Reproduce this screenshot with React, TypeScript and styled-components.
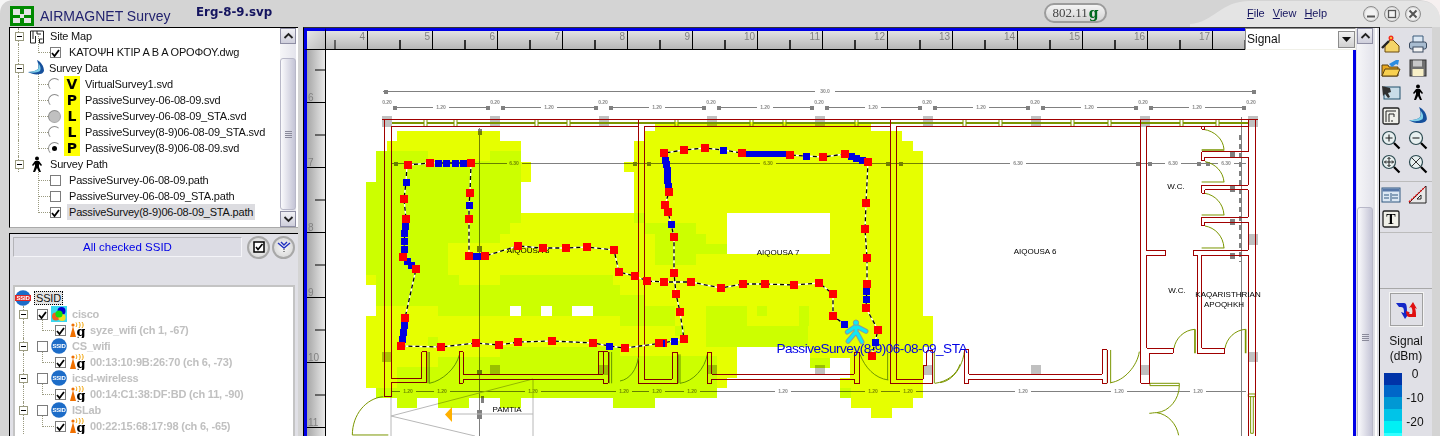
import React from 'react';
import styled, { createGlobalStyle } from 'styled-components';

const GlobalStyle = createGlobalStyle`
  html, body {
    margin: 0;
    padding: 0;
    background: #f4f4f4;
    overflow: hidden;
  }
  * { box-sizing: border-box; }
`;

const panelGrey = '#e0e0e6';
const chromeGrey = '#d4d4d4';
const sans = '"Liberation Sans", Arial, sans-serif';

const Window = styled.div`
  width: 1440px;
  height: 436px;
  display: flex;
  flex-direction: column;
  overflow: hidden;
  font-family: ${sans};
  background: ${chromeGrey};
`;

/* ---------- title bar ---------- */

const TitleBar = styled.div`
  position: relative;
  height: 27px;
  flex: none;
  display: flex;
  align-items: center;
  padding-left: 10px;
  background: ${chromeGrey};
`;

const TitleWave = styled.svg`
  position: absolute;
  left: 0;
  top: 0;
`;

const TitleItems = styled.div`
  position: relative;
  display: flex;
  align-items: center;
  width: 100%;
`;

const Logo = styled.svg`
  flex: none;
  margin-top: 4px;
`;

const AppName = styled.div`
  width: 137px;
  margin-left: 6px;
  margin-top: 4px;
  font-size: 14px;
  color: #23236f;
  white-space: nowrap;
`;

const FileName = styled.div`
  margin-left: 19px;
  margin-top: -3px;
  width: 848px;
  font: bold 11.8px "DejaVu Sans", sans-serif;
  color: #14145f;
`;

const ModePill = styled.div`
  width: 63px;
  height: 20px;
  margin-top: -2px;
  border: 2px solid #9c9c9c;
  border-radius: 10px;
  background: linear-gradient(#f4f4f4, #d4d4d4);
  display: flex;
  align-items: center;
  justify-content: center;
  font: 13px "Liberation Serif", serif;
  color: #444;
`;

const ModeG = styled.span`
  font: bold 14px "DejaVu Serif", serif;
  color: #006a1e;
  margin-left: 1px;
`;

const Menu = styled.div`
  margin-left: 140px;
  margin-top: -1px;
  display: flex;
  gap: 8px;
  font-size: 11px;
  color: #14145f;
`;

const MenuLetter = styled.span`
  text-decoration: underline;
`;

const WinButtons = styled.div`
  margin-left: 36px;
  display: flex;
  gap: 5px;
`;

const WinButton = styled.div`
  width: 16px;
  height: 16px;
  border-radius: 50%;
  border: 1px solid #8c8c8c;
  background: #f2f2f2;
  box-shadow: inset 0 0 2px #aaa;
  display: flex;
  align-items: center;
  justify-content: center;
`;

/* ---------- body ---------- */

const Body = styled.div`
  flex: 1;
  display: flex;
  min-height: 0;
`;

const SidePanel = styled.div`
  width: 303px;
  flex: none;
  padding-left: 9px;
  display: flex;
  flex-direction: column;
  background: ${chromeGrey};
`;

const TopTree = styled.div`
  height: 201px;
  width: 289px;
  flex: none;
  display: flex;
  border-top: 1px solid #000;
  border-left: 1px solid #000;
  background: #fff;
  border-bottom: 1px solid #aaa;
`;

const TreeList = styled.div`
  flex: 1;
  min-width: 0;
`;

const Scrollbar = styled.div`
  width: 16px;
  flex: none;
  display: flex;
  flex-direction: column;
  background: linear-gradient(90deg, #f6f6f8, #e4e4ec);
`;

const TreeScroll = styled(Scrollbar)`
  margin-right: 2px;
`;

const ScrollButton = styled.div`
  height: 16px;
  flex: none;
  border: 1px solid #8e8ea4;
  background: linear-gradient(#f0f0f4, #cfcfdc);
  display: flex;
  align-items: center;
  justify-content: center;
`;

const ScrollThumb = styled.div<{ $top: number; $height: number }>`
  margin-top: ${(p) => p.$top}px;
  height: ${(p) => p.$height}px;
  flex: none;
  border: 1px solid #b8b8c8;
  border-radius: 3px;
  background: linear-gradient(90deg, #fafafc, #c4c4d6);
  display: flex;
  align-items: center;
  justify-content: center;
`;

const ScrollGrip = styled.div`
  width: 7px;
  height: 7px;
  background: repeating-linear-gradient(#8a8a9a 0 1px, transparent 1px 2px);
`;

const ScrollFill = styled.div`
  flex: 1;
`;

const Row = styled.div<{ $pad: number; $trunk?: boolean; $elbow?: number; $trunkAt?: number }>`
  position: relative;
  height: 16px;
  padding-left: ${(p) => p.$pad}px;
  display: flex;
  align-items: center;
  font-size: 11px;
  letter-spacing: -0.2px;
  color: #111;
  white-space: nowrap;

  &::before {
    content: '';
    display: ${(p) => (p.$trunk ? 'block' : 'none')};
    position: absolute;
    left: ${(p) => p.$trunkAt ?? 8}px;
    top: 0;
    bottom: 0;
    border-left: 1px dotted #9a9a80;
  }

  &::after {
    content: '';
    display: ${(p) => (p.$elbow ? 'block' : 'none')};
    position: absolute;
    left: ${(p) => p.$elbow}px;
    top: -8px;
    height: 16px;
    width: 11px;
    border-left: 1px dotted #9a9a80;
    border-bottom: 1px dotted #9a9a80;
  }
`;

const Expander = styled.div<{ $gap: number }>`
  position: relative;
  z-index: 1;
  width: 9px;
  height: 9px;
  flex: none;
  margin-right: ${(p) => p.$gap}px;
  border: 1px solid #9a9a80;
  background: #fff;
  display: flex;
  align-items: center;
  justify-content: center;

  &::after {
    content: '';
    width: 5px;
    height: 1px;
    background: #000;
  }
`;

const CheckFrame = styled.div<{ $gap: number }>`
  position: relative;
  z-index: 1;
  width: 11px;
  height: 11px;
  flex: none;
  margin-right: ${(p) => p.$gap}px;
  border: 1px solid #7c7c7c;
  background: #fff;
`;

const Radio = styled.div<{ $state: 'empty' | 'grey' | 'on' }>`
  position: relative;
  z-index: 1;
  width: 13px;
  height: 13px;
  flex: none;
  margin-right: 3px;
  border-radius: 50%;
  border: 1px solid ${(p) => (p.$state === 'grey' ? '#a8a8a8' : '#fff')};
  border-top-color: #8c8c8c;
  border-left-color: #8c8c8c;
  background: ${(p) => (p.$state === 'grey' ? '#c0c0c0' : '#fff')};
  display: flex;
  align-items: center;
  justify-content: center;

  &::after {
    content: '';
    display: ${(p) => (p.$state === 'on' ? 'block' : 'none')};
    width: 5px;
    height: 5px;
    border-radius: 50%;
    background: #000;
  }
`;

const TypeTag = styled.div`
  width: 16px;
  height: 16px;
  flex: none;
  margin-right: 5px;
  background: #ffff00;
  font: bold 14px "DejaVu Sans", sans-serif;
  letter-spacing: 0;
  line-height: 16px;
  text-align: center;
  color: #000;
`;

const NodeIcon = styled.span<{ $gap: number }>`
  position: relative;
  z-index: 1;
  display: flex;
  flex: none;
  margin-right: ${(p) => p.$gap}px;
`;

const Selected = styled.span`
  background: #dcdce0;
  margin-left: -2px;
  padding: 0 2px;
  width: 188px;
  height: 16px;
  line-height: 16px;
`;

const LowerPanel = styled.div`
  margin-top: 5px;
  flex: 1;
  min-height: 0;
  width: 289px;
  border-top: 1px solid #000;
  border-left: 1px solid #000;
  padding: 3px 3px 0 3px;
  background: ${panelGrey};
  display: flex;
  flex-direction: column;
`;

const FilterRow = styled.div`
  height: 20px;
  flex: none;
  display: flex;
  align-items: center;
`;

const FilterField = styled.div`
  width: 230px;
  height: 20px;
  border: 1px solid #f4f4f8;
  border-top-color: #b4b4b8;
  border-left-color: #b4b4b8;
  background: #dcdce4;
  text-align: center;
  line-height: 18px;
  font-size: 11.5px;
  color: #0000e6;
`;

const RoundButton = styled.div<{ $ml: number }>`
  width: 23px;
  height: 23px;
  flex: none;
  margin-left: ${(p) => p.$ml}px;
  border-radius: 50%;
  border: 2px solid #a8a8a8;
  background: radial-gradient(#f8f8f8, #d0d0d0);
  display: flex;
  align-items: center;
  justify-content: center;
`;

const SsidTree = styled.div`
  margin-top: 28px;
  flex: 1;
  min-height: 0;
  width: 282px;
  overflow: hidden;
  padding-top: 3px;
  background: #fff;
  border: 2px solid #c4c4c4;
  border-bottom: none;
`;

const RootLabel = styled.span`
  margin-left: 3px;
  padding: 0 1px;
  height: 14px;
  line-height: 13px;
  border: 1px dotted #000;
  background: #e4e4e4;
`;

const SsidName = styled.span`
  font-weight: bold;
  font-size: 11px;
  color: #c0c0c0;
`;

/* ---------- map ---------- */

const MapPane = styled.div`
  width: 1077px;
  flex: none;
  display: flex;
  border-left: 1px solid #000;
  border-top: 1px solid #333;
  border-right: 1px solid #000;
  background: ${panelGrey};
`;

const MapFrame = styled.div`
  width: 1052px;
  flex: none;
  display: flex;
  flex-direction: column;
`;

const RulerRow = styled.div`
  height: 22px;
  flex: none;
  display: flex;
`;

const RulerCorner = styled.div`
  width: 22px;
  flex: none;
  border-top: 3px solid #0000e6;
  border-left: 3px solid #0000e6;
  border-right: 1px solid #000;
  border-bottom: 1px solid #000;
  background: linear-gradient(135deg, #e6e6e6, #bcbcbc);
`;

const TopRuler = styled.svg`
  width: 919px;
  height: 22px;
  flex: none;
  border-top: 3px solid #0000e6;
  background: linear-gradient(#e2e2e2, #b4b4b4);
`;

const LensSelect = styled.div`
  flex: 1;
  display: flex;
  align-items: center;
  background: #fff;
  border: 1px solid #8c8c8c;
  border-right-color: #f0f0e8;
  border-bottom-color: #f0f0e8;
  padding-left: 1px;
  font-size: 12px;
  color: #111;
`;

const LensValue = styled.span`
  flex: 1;
`;

const LensArrow = styled.div`
  width: 17px;
  height: 17px;
  flex: none;
  border: 1px solid #8c8c8c;
  background: linear-gradient(#f2f2f2, #d0d0d0);
  display: flex;
  align-items: center;
  justify-content: center;
`;

const CanvasRow = styled.div`
  flex: 1;
  min-height: 0;
  display: flex;
  border-left: 3px solid #0000e6;
  border-right: 3px solid #0000e6;
`;

const LeftRuler = styled.svg`
  width: 19px;
  height: 386px;
  flex: none;
  background: linear-gradient(90deg, #a6a6a6, #ececec);
`;

const Plan = styled.svg`
  width: 1027px;
  height: 386px;
  flex: none;
  background: #fff;
`;

const MapScroll = styled(Scrollbar)`
  margin-left: 1px;
`;

const ScrollEdge = styled.div`
  flex: 1;
  border-left: 1px solid #fff;
  border-right: 1px solid #fff;
  margin: 0 2px;
  background: ${chromeGrey};
`;

const RulerNumber = styled.text`
  font: 10px ${sans};
  fill: #808080;
`;

const WallLines = styled.g`
  fill: none;
  stroke: #a00000;
  stroke-width: 3;
  shape-rendering: crispEdges;
`;

const DoorLines = styled.g`
  fill: none;
  stroke: #7a9600;
  stroke-width: 3;
`;

const DimLines = styled.g`
  stroke: #808080;
  stroke-width: 1;
  fill: #808080;
  shape-rendering: crispEdges;
`;

const DimLabel = styled.text`
  font: bold 5px ${sans};
  fill: #8a8a8a;
  stroke: none;
  text-anchor: middle;
`;

const RoomLabel = styled.text`
  font: 8px ${sans};
  fill: #000;
  text-anchor: middle;
`;

const HeatLayer = styled.g`
  mix-blend-mode: multiply;
  shape-rendering: crispEdges;
`;

const PathLabel = styled.text`
  font: 13.6px ${sans};
  fill: #0000e6;
`;

const Markers = styled.g`
  shape-rendering: crispEdges;
`;

/* ---------- right toolbar ---------- */

const ToolBar = styled.div`
  flex: 1;
  display: flex;
  background: ${chromeGrey};
`;

const ToolColumn = styled.div`
  width: 52px;
  flex: none;
  display: flex;
  flex-direction: column;
  align-items: stretch;
  background: ${panelGrey};
  border-top: 1px solid #bcbcbc;
`;

const ToolGrid = styled.div<{ $h: number; $pad: number }>`
  height: ${(p) => p.$h}px;
  flex: none;
  padding-top: ${(p) => p.$pad}px;
  display: grid;
  grid-template-columns: 22px 22px;
  grid-auto-rows: 22px;
  column-gap: 5px;
  row-gap: 2px;
  position: relative;
  border-bottom: 1px solid #bcbcbc;
`;

const ToolIcon = styled.div`
  display: flex;
  align-items: center;
  justify-content: center;
`;

const RefreshPad = styled.div`
  flex: 1;
`;

const LegendBox = styled.div`
  height: 148px;
  flex: none;
  border-top: 1px solid #a8a8a8;
  display: flex;
  flex-direction: column;
  align-items: center;
  padding-top: 4px;
`;

const RefreshButton = styled.div`
  width: 33px;
  height: 33px;
  flex: none;
  border: 1px solid #a0a0a0;
  outline: 1px solid #f4f4f4;
  display: flex;
  align-items: center;
  justify-content: center;
`;

const LegendTitle = styled.div`
  margin-top: 8px;
  font-size: 12px;
  line-height: 15px;
  text-align: center;
  color: #111;
`;

const LegendBody = styled.div`
  margin-top: 9px;
  width: 52px;
  padding-left: 4px;
  display: flex;
`;

const LegendScale = styled.div`
  width: 18px;
  flex: none;
`;

const LegendStep = styled.div<{ $color: string }>`
  height: 12px;
  background: ${(p) => p.$color};
`;

const LegendTicks = styled.div`
  width: 26px;
  margin-top: -11px;
  text-align: center;
  font-size: 12px;
  line-height: 24px;
  color: #111;
`;

/* ---------- icons ---------- */

function Tick() {
  return (
    <svg width="9" height="9" viewBox="0 0 9 9">
      <path d="M1 4l2.5 3L8 1" fill="none" stroke="#000" strokeWidth="1.8" />
    </svg>
  );
}

function SiteMapIcon() {
  return (
    <svg width="16" height="16" viewBox="0 0 16 16" fill="none" stroke="#222" strokeWidth="1">
      <path d="M1.5 15V3h13v12h-4v-4h3M1.5 15h5V8M4 3v8M8 3v3h4" />
    </svg>
  );
}

function BoomerangIcon({ size = 18 }: { size?: number }) {
  return (
    <svg width={size} height={size} viewBox="0 0 18 18">
      <path d="M10 1c4 2 7 6 7 11-1 2-2 3-4 3-4 1-8 0-12-2 4 0 8-1 10-3 1-3 0-6-1-9z" fill="#16509c" />
      <path d="M1 13c4 0 8-1 10-3 1-2 1-4 0-6 3 3 3 6 2 8-3 2-8 2-12 1z" fill="#7fd0e8" />
    </svg>
  );
}

function WalkerIcon() {
  return (
    <svg width="16" height="17" viewBox="0 0 16 17">
      <circle cx="8" cy="2.5" r="2" fill="#000" />
      <path d="M6 5h4l3 4-1 1-2-2v3l2 5h-2l-2-4-2 4H4l2-6V8l-2 2-1-1z" fill="#000" />
    </svg>
  );
}

function Chevron({ down }: { down?: boolean }) {
  return (
    <svg width="11" height="8" viewBox="0 0 11 8">
      <path d={down ? 'M1.5 2l4 4 4-4' : 'M1.5 6l4-4 4 4'} fill="none" stroke="#222" strokeWidth="1.8" />
    </svg>
  );
}

function SsidIcon({ root }: { root?: boolean }) {
  return (
    <svg width="16" height="16" viewBox="0 0 16 16">
      <circle cx="8" cy="8" r="7.8" fill="#1c6cc8" />
      {root && <rect x="0" y="5" width="16" height="6" fill="#e02828" />}
      <text x="8" y="10.2" fontSize="6" fontWeight="bold" textAnchor="middle" fill="#fff" fontFamily={sans}>
        SSID
      </text>
    </svg>
  );
}

function GroupIcon() {
  return (
    <svg width="16" height="16" viewBox="0 0 16 16">
      <rect width="16" height="16" fill="#38d8f0" />
      <circle cx="10.5" cy="5" r="4" fill="#0000d0" />
      <circle cx="5" cy="10.5" r="4" fill="#f06020" />
      <circle cx="11" cy="11.5" r="3.6" fill="#f0e020" />
      <circle cx="8" cy="8" r="3.6" fill="#10e010" />
    </svg>
  );
}

function RadioGIcon() {
  return (
    <svg width="15" height="16" viewBox="0 0 15 16">
      <path d="M3 4l3 11H0z" fill="#f07000" />
      <circle cx="3" cy="3" r="1.6" fill="#f07000" />
      <path d="M6 .5c1 1.5 1 3 0 4.5M9 0c1.5 2 1.5 4 0 6M12 0c1.5 2 1.5 4 0 6" fill="none" stroke="#f0a000" strokeWidth="1" />
      <text x="11" y="14" fontSize="13" fontWeight="bold" textAnchor="middle" fill="#000" fontFamily={'"DejaVu Serif", serif'}>
        g
      </text>
    </svg>
  );
}

function Lens({ kind }: { kind: 'plus' | 'minus' | 'move' | 'cross' }) {
  return (
    <svg width="20" height="20" viewBox="0 0 20 20">
      <circle cx="8" cy="8" r="6.5" fill="#e8f0f0" stroke="#2c4a50" strokeWidth="1.2" />
      <path d="M13 13l5.5 5.5" stroke="#000" strokeWidth="2.2" />
      {kind === 'plus' && <path d="M4.5 8h7M8 4.5v7" stroke="#222" strokeWidth="1.1" />}
      {kind === 'minus' && <path d="M4.5 8h7" stroke="#222" strokeWidth="1.1" />}
      {kind === 'move' && <path d="M3.5 8h9M8 3.5v9M6.5 5L8 3.5 9.500 5M6.5 11L8 12.5 9.500 11M5 6.500L3.5 8 5 9.500M11 6.500L12.5 8 11 9.500" stroke="#222" strokeWidth="1" fill="none" />}
      {kind === 'cross' && <path d="M3.500 3.500l9 9M12.500 3.500l-9 9" stroke="#333" strokeWidth="1" />}
    </svg>
  );
}

const toolIcons: React.ReactNode[] = [
  <svg key="new" width="20" height="20" viewBox="0 0 20 20">
    <path d="M4 18V11l5-5h3l6 6v6z" fill="#f4d468" stroke="#6a4a10" strokeWidth="1" />
    <path d="M1 14l7-7" stroke="#222" strokeWidth="2.400" />
    <circle cx="10" cy="4" r="2.500" fill="#f03020" />
    <circle cx="10" cy="4" r="1" fill="#ffe040" />
  </svg>,
  <svg key="print" width="20" height="20" viewBox="0 0 20 20">
    <path d="M5 8V2h10v6" fill="#dce8f4" stroke="#3a5a7a" />
    <rect x="1.500" y="8" width="17" height="7" rx="2" fill="#a8bcd0" stroke="#3a4a60" />
    <rect x="5" y="13" width="10" height="5" fill="#f4f4f4" stroke="#3a4a60" />
  </svg>,
  <svg key="open" width="20" height="20" viewBox="0 0 20 20">
    <path d="M1 18V7h6l1 2h9v9z" fill="#e8a820" stroke="#5a4010" />
    <path d="M1 18l3-7h15l-3 7z" fill="#f8d050" stroke="#5a4010" />
    <path d="M8 6l7-4 3 0-1 5-2-1-4 3z" fill="#2c8ce0" />
  </svg>,
  <svg key="save" width="20" height="20" viewBox="0 0 20 20">
    <rect x="2" y="2" width="16" height="16" fill="#707070" stroke="#303030" />
    <rect x="5" y="2.500" width="9" height="6" fill="#c8c8c8" />
    <rect x="4.500" y="11" width="11" height="7" fill="#f8f0c8" />
  </svg>,
  <svg key="survey" width="20" height="20" viewBox="0 0 20 20">
    <rect x="3" y="5" width="16" height="12" fill="#c8dce8" stroke="#20506c" />
    <path d="M1 4l8 2 1 4-3 1 2 4-2 1-3-4-2 2z" fill="#303030" />
  </svg>,
  <WalkerIcon key="walk" />,
  <svg key="plan" width="20" height="20" viewBox="0 0 20 20" fill="none">
    <rect x="2" y="2" width="16" height="16" rx="1.500" fill="#f0f0ea" stroke="#222" strokeWidth="1.300" />
    <path d="M5 16V5h10M8 16V8h5v3M11 16v-2" stroke="#222" />
  </svg>,
  <BoomerangIcon key="data" size={20} />,
  <Lens key="zi" kind="plus" />,
  <Lens key="zo" kind="minus" />,
  <Lens key="zm" kind="move" />,
  <Lens key="zx" kind="cross" />,
];

const toolIconsLower: React.ReactNode[] = [
  <svg key="table" width="20" height="20" viewBox="0 0 20 20" fill="none">
    <rect x="1" y="3" width="18" height="14" fill="#dce8f4" stroke="#305880" />
    <rect x="1.500" y="3.500" width="17" height="3" fill="#5878a8" />
    <path d="M3 10h5M3 13h5M11 10h6M11 13h6M10 8v8" stroke="#305880" />
  </svg>,
  <svg key="measure" width="20" height="20" viewBox="0 0 20 20" fill="none">
    <path d="M18 1v17H1z" fill="#e8e8e8" stroke="#222" />
    <path d="M13 10v4H9z" fill="#fff" stroke="#222" />
    <path d="M1 17L17 2" stroke="#e01818" strokeWidth="1.500" strokeDasharray="2 1" />
  </svg>,
  <svg key="text" width="20" height="20" viewBox="0 0 20 20">
    <rect x="2" y="2" width="16" height="16" rx="1.500" fill="#f0f0e8" stroke="#222" strokeWidth="1.300" />
    <text x="10" y="15" fontSize="14" fontWeight="bold" textAnchor="middle" fontFamily={'"Liberation Serif", serif'} fill="#000">
      T
    </text>
  </svg>,
];

/* ---------- plan data ---------- */

type R = [number, number, number, number];

const yellowAreas: R[] = [
  [397, 131, 500, 141], [387, 141, 521, 151], [376, 151, 521, 162], [376, 162, 531, 182], [366, 182, 521, 213],
  [366, 213, 923, 275], [366, 275, 923, 285], [376, 285, 923, 316], [366, 316, 933, 347], [366, 347, 737, 378],
  [366, 378, 727, 388], [376, 388, 717, 398], [810, 347, 923, 358], [810, 358, 830, 368], [850, 358, 923, 378],
  [840, 378, 923, 398], [851, 398, 913, 408], [871, 408, 892, 418],
  [655, 122, 871, 131], [645, 131, 902, 141], [634, 141, 913, 151], [634, 151, 923, 162], [624, 162, 923, 172],
  [634, 172, 923, 213],
];

const limeAreas: R[] = [
  [376, 151, 428, 161], [490, 151, 521, 161], [376, 161, 521, 182], [366, 182, 521, 223], [366, 223, 510, 234],
  [366, 234, 500, 243], [366, 243, 448, 275], [376, 275, 459, 285], [500, 275, 613, 285], [376, 285, 620, 306],
  [438, 306, 620, 316], [428, 337, 438, 347], [500, 347, 620, 388], [438, 357, 500, 388], [397, 367, 438, 388],
  [376, 388, 620, 398], [397, 398, 417, 408], [438, 398, 469, 408], [500, 398, 521, 408], [613, 398, 655, 408],
  [620, 356, 655, 398], [655, 356, 717, 398], [634, 213, 645, 223], [645, 223, 696, 234], [655, 234, 706, 254],
  [706, 244, 727, 254], [655, 254, 696, 265], [620, 295, 645, 326], [645, 306, 675, 326], [675, 326, 685, 336],
  [706, 306, 747, 326], [757, 306, 767, 316], [799, 306, 809, 326], [706, 326, 808, 347], [810, 358, 830, 368],
  [840, 388, 851, 398],
];

const heatHoles: R[] = [
  [727, 213, 830, 254], [510, 306, 521, 316], [541, 306, 552, 316], [572, 306, 593, 316],
  [366, 285, 376, 316],
];

const walkA: [number, number][] = [
  [407, 165], [430, 163], [471, 163], [470, 193], [469, 205], [469, 219], [469, 256], [485, 256], [518, 246],
  [543, 248], [566, 248], [587, 247], [614, 250], [619, 272], [635, 276], [647, 281], [664, 282], [691, 282],
  [721, 288], [743, 284], [765, 284], [794, 285], [819, 283], [833, 294], [833, 316], [844, 324],
];

const walkB: [number, number][] = [
  [407, 165], [406, 182], [404, 199], [406, 219], [405, 226], [404, 249], [403, 257], [416, 269], [405, 318],
  [401, 346], [441, 347], [476, 343], [499, 345], [518, 342], [552, 341], [593, 343], [609, 346], [625, 348],
  [663, 343], [684, 339], [680, 312], [676, 294], [674, 273], [674, 237], [671, 224], [668, 212], [665, 205],
  [669, 192], [664, 153], [684, 150], [705, 148], [723, 150], [742, 153], [790, 155], [806, 156], [823, 157],
  [845, 154], [868, 162], [866, 203], [865, 229], [867, 258], [867, 284], [866, 308], [878, 330], [875, 342], [872, 356],
];

const redPoints: [number, number][] = [
  [408, 165], [430, 163], [471, 163], [470, 193], [469, 219], [406, 219], [404, 199], [403, 257], [416, 269],
  [405, 318], [401, 346], [441, 347], [476, 343], [499, 345], [518, 342], [552, 341], [593, 343], [469, 256],
  [485, 256], [518, 246], [543, 248], [566, 248], [587, 247], [614, 250], [619, 272], [635, 276], [647, 281],
  [664, 282], [691, 282], [674, 273], [676, 294], [680, 312], [684, 339], [659, 343], [663, 343], [625, 348],
  [721, 288], [743, 284], [765, 284], [794, 285], [819, 283], [833, 294], [833, 316], [867, 258], [867, 284],
  [866, 308], [878, 330], [872, 356], [664, 153], [684, 150], [705, 148], [742, 153], [790, 155], [823, 157],
  [845, 154], [868, 162], [866, 203], [865, 229], [669, 192], [665, 205], [668, 212], [674, 237],
];

const bluePoints: [number, number][] = [
  [438, 163], [446, 163], [455, 163], [463, 163], [406, 182], [469, 205], [405, 226], [404, 233], [404, 241],
  [404, 249], [407, 261], [411, 265], [404, 325], [403, 332], [402, 339], [609, 346], [473, 256], [478, 256],
  [674, 341], [844, 324], [866, 291], [866, 299], [875, 342], [723, 150], [806, 156], [851, 156], [856, 158],
  [862, 160], [665, 160], [666, 164], [667, 170], [667, 175], [667, 180], [668, 186], [671, 224],
];

const pillars: R[] = [
  [382, 116, 392, 127], [490, 116, 500, 127], [599, 116, 609, 127], [707, 116, 717, 127], [815, 116, 825, 127],
  [923, 116, 933, 127], [1031, 116, 1041, 127], [1140, 116, 1150, 127], [1248, 116, 1258, 127],
  [382, 352, 392, 362], [490, 365, 500, 375], [598, 365, 608, 375], [708, 365, 717, 374], [815, 365, 825, 375],
  [923, 365, 933, 375], [1031, 365, 1041, 375], [1140, 365, 1150, 375], [1248, 234, 1258, 245], [1248, 352, 1258, 362],
];

const mullions = [424, 454, 535, 567, 675, 750, 783, 855, 963, 999, 1071, 1108, 1180, 1216];

const pathOf = (pts: [number, number][]) => pts.map((p, i) => `${i ? 'L' : 'M'}${p[0]} ${p[1]}`).join('');

const rulerTop = Array.from({ length: 14 }, (_, i) => i);
const rulerLeft = [6, 7, 8, 9, 10, 11];

function TopRulerMarks() {
  return (
    <TopRuler viewBox="326 30 919 19">
      {rulerTop.map((i) => {
        const x = 367 + i * 65;
        return (
          <g key={i}>
            <path d={`M${x + 0.5} 30V49M${x - 32} 39V49`} stroke="#000" fill="none" />
            <path d={`M${x + 33} 39V49`} stroke="#000" fill="none" />
            <RulerNumber x={x - 2} y={39} textAnchor="end">{i + 4}</RulerNumber>
          </g>
        );
      })}
      <path d="M326 48.500H1245" stroke="#000" />
    </TopRuler>
  );
}

function LeftRulerMarks() {
  return (
    <LeftRuler viewBox="307 50 19 386">
      {rulerLeft.map((n, i) => {
        const y = 102 + i * 65;
        return (
          <g key={n}>
            <path d={`M307 ${y + 0.5}H326M315 ${y - 32}H326`} stroke="#000" fill="none" />
            <RulerNumber x={308} y={y - 1}>{n}</RulerNumber>
          </g>
        );
      })}
      <path d="M325.500 50V436" stroke="#000" />
    </LeftRuler>
  );
}

function Dimensions() {
  const spans = Array.from({ length: 8 }, (_, i) => 387 + i * 108);
  const bottom = [408, 442, 533, 624, 657, 692, 783, 873, 908, 1023, 1119, 1198];
  return (
    <DimLines>
      <path d="M383 91.500H815M835 91.500H1252" fill="none" />
      <rect x="384" y="90" width="3" height="3" />
      <rect x="1252" y="90" width="3" height="3" />
      <DimLabel x={825} y={93}>30.0</DimLabel>
      {spans.map((x) => (
        <g key={x}>
          <path d={`M${x + 8} 107.500H${x + 46}M${x + 62} 107.500H${x + 100}`} fill="none" />
          <rect x={x + 6} y={106} width="3" height="3" />
          <rect x={x + 99} y={106} width="3" height="3" />
          <DimLabel x={x + 54} y={109}>1.20</DimLabel>
          <DimLabel x={x + 108} y={104}>0.20</DimLabel>
        </g>
      ))}
      <DimLabel x={387} y={104}>0.20</DimLabel>
      <path d="M391 163.500H507M522 163.500H760M776 163.500H1010M1026 163.500H1165M1181 163.500H1218M1234 163.500H1246" fill="none" />
      {[395, 634, 648, 887, 900, 1137, 1149, 1198, 1207].map((x) => (
        <rect key={x} x={x - 1} y={162} width="3" height="3" />
      ))}
      {[514, 768, 1018, 1173, 1226].map((x) => (
        <DimLabel key={x} x={x} y={165}>6.30</DimLabel>
      ))}
      <path d="M391 391.500H1246" fill="none" />
      {bottom.map((x) => (
        <g key={x}>
          <rect x={x - 8} y={390} width="16" height="3" fill="#fff" stroke="none" />
          <DimLabel x={x} y={393}>1.20</DimLabel>
        </g>
      ))}
      <path d="M479.500 128V436M1241.500 117V436" fill="none" />
      <rect x="478" y="129" width="3" height="5" />
      <rect x="477" y="246" width="4" height="5" />
      <rect x="477" y="370" width="4" height="3" />
      <rect x="477" y="410" width="4" height="8" />
      <rect x="481" y="396" width="2" height="6" />
      <path d="M1240 135V262" strokeWidth="2" strokeDasharray="5 4" fill="none" />
      {[152, 186, 219, 253].map((y) => (
        <rect key={y} x="1230" y={y} width="4" height="5" />
      ))}
      <path d="M391 397V436M533 379V436M391 416L533 379M391 416L475 436M452 414H533" fill="none" stroke="#b8b8b8" shapeRendering="auto" />
    </DimLines>
  );
}

function FloorWalls() {
  return (
    <g>
      <g shapeRendering="crispEdges">
        {pillars.map((p) => (
          <rect key={`${p[0]}-${p[1]}`} x={p[0]} y={p[1]} width={p[2] - p[0]} height={p[3] - p[1]} fill="#c0c0c0" />
        ))}
      </g>
      <path d="M392 123H1248" stroke="#7a9600" strokeWidth="2" fill="none" />
      {mullions.map((x) => (
        <rect key={x} x={x} y={119.500} width="3" height="7" fill="#fff" stroke="#7a9600" />
      ))}
      <WallLines>
        <path d="M382 119.500H1258" strokeWidth="1" />
        <path d="M391 126.500H638M644 126.500H890M896 126.500H1141M1147 126.500H1248" strokeWidth="1" />
      </WallLines>
      <g transform="translate(300 225) scale(0.3333)">
        <DoorLines>
          <path d="M388 475c40-8 80-45 90-85M157 630c0-60 40-110 93-115M157 630H265M384 381V475M388 381V475M928 381V475M935 381V475" />
        </DoorLines>
        <WallLines>
          <path d="M254 515V-318M274 460V-297M254 515H274V473H380V381H365V460H274" />
          <path d="M478 381V475H490V463H910V475H925V381H910V448H895" />
          <path d="M490 381H478M490 381V448H895" />
          <path d="M895 448V381H925" />
        </WallLines>
      </g>
      <g transform="translate(620 90) scale(0.3333)">
        <WallLines>
          <path d="M55 88V879M73 109V867M811 88V879M829 109V867" />
        </WallLines>
      </g>
      <g transform="translate(620 256) scale(0.3333)">
        <DoorLines>
          <path d="M175 295V382M180 295V382M180 382c40-5 75-45 82-87M720 295c15 40 45 72 85 77M803 290V372M943 285V382M945 382c35-5 65-25 75-57M0 375c30-5 50-35 55-70" />
        </DoorLines>
        <WallLines>
          <path d="M55 382H173V290H157V370H73" />
          <path d="M262 290H275V355H703V290H719V382H703V370H275V382H262Z" />
          <path d="M810 382H938V285H920V330H910V370H828" />
        </WallLines>
      </g>
      <g transform="translate(940 90) scale(0.3333)">
        <DoorLines>
          <path d="M790 118c35 5 60 30 62 60M795 215c30 5 55 30 57 61M795 310c30 5 55 30 57 65M795 408c30 5 55 30 57 66" />
          <path d="M702 775c5-30 30-55 63-57M855 775c5-30 30-55 62-57M718 887c0 40-30 78-68 81-10 0-15 2-22 2M650 968c35 5 60 35 66 68M512 878c40-5 80-50 86-93M0 878c40-5 68-50 73-93" />
          <path d="M630 880H718V887H630ZM925 912H946V920H925ZM932 920V1030H940V920M502 780V880M512 780V880M785 276H853M785 375H853M785 474H853" />
          <path d="M785 180H853M765 718V790M917 718V790" strokeWidth="5" />
        </DoorLines>
        <WallLines>
          <path d="M925 88V186M925 202V286M925 300V382M925 397V481M925 496V1038M946 88V1038" />
          <path d="M602 88V880H630V790H700V775H620V496H677V482H620V109" />
          <path d="M925 186H785V212H795V202H925M925 286H785V310H795V300H925M925 382H785V408H795V397H925" />
          <path d="M925 481H760V496H772V790H855V775H785V496H925" />
          <path d="M785 110H795V118H785Z" />
          <path d="M73 780V880H87V868H487V880H502V780H487V853H87V780H73" />
        </WallLines>
      </g>
    </g>
  );
}

function HeatMap() {
  const rect = (r: R, fill: string, key: string) => (
    <rect key={key} x={r[0]} y={r[1]} width={r[2] - r[0]} height={r[3] - r[1]} fill={fill} />
  );
  return (
    <HeatLayer>
      {yellowAreas.map((r, i) => rect(r, '#e6ff00', `y${i}`))}
      {limeAreas.map((r, i) => rect(r, '#ccff00', `l${i}`))}
      {heatHoles.map((r, i) => rect(r, '#fff', `h${i}`))}
    </HeatLayer>
  );
}

function SurveyWalk() {
  return (
    <g>
      {[walkA, walkB].map((pts, i) => (
        <g key={i} fill="none">
          <path d={pathOf(pts)} stroke="#fff" strokeWidth="1.300" />
          <path d={pathOf(pts)} stroke="#000" strokeWidth="1.300" strokeDasharray="4 3" />
        </g>
      ))}
      <Markers>
        {bluePoints.map((p, i) => (
          <rect key={i} x={p[0] - 3} y={p[1] - 3} width="7" height="7" fill="#0000e0" />
        ))}
        <rect x="746" y="151" width="42" height="6" fill="#0000e0" />
        {redPoints.map((p, i) => (
          <rect key={i} x={p[0] - 4} y={p[1] - 4} width="8" height="8" fill="#ff0000" />
        ))}
        <rect x="663" y="340" width="1.500" height="7" fill="#0000e0" />
      </Markers>
      <g transform="translate(620 256) scale(0.3333)">
        <g fill="none" strokeLinecap="round" strokeLinejoin="round">
          <path d="M708 202V232M708 210L682 228M708 210L738 226M704 232L684 256M712 232L726 258" stroke="#8a9a9a" strokeWidth="15" />
          <path d="M708 202V232M708 210L682 228M708 210L738 226M704 232L684 256M712 232L726 258" stroke="#10e8f4" strokeWidth="9" />
        </g>
        <circle cx="708" cy="200" r="8" fill="#10e8f4" stroke="#8a9a9a" strokeWidth="3" />
      </g>
      <PathLabel x={776.5} y={352.500} textLength={191} lengthAdjust="spacing">PassiveSurvey(8-9)06-08-09_STA</PathLabel>
    </g>
  );
}

function FloorPlan() {
  return (
    <Plan viewBox="326 50 1027 386">
      <Dimensions />
      <FloorWalls />
      <path d="M445 414.500L452 407V422Z" fill="#ffb000" />
      <RoomLabel x={528} y={253}>AIQOUSA 8</RoomLabel>
      <RoomLabel x={778} y={254.500}>AIQOUSA 7</RoomLabel>
      <RoomLabel x={1035} y={254}>AIQOUSA 6</RoomLabel>
      <RoomLabel x={1176} y={189}>W.C.</RoomLabel>
      <RoomLabel x={1177} y={293}>W.C.</RoomLabel>
      <RoomLabel x={1228} y={297} fontSize="6">KAQARISTHRIAN</RoomLabel>
      <RoomLabel x={1224} y={307}>APOQHKH</RoomLabel>
      <RoomLabel x={507} y={412}>PAMTIA</RoomLabel>
      <HeatMap />
      <SurveyWalk />
    </Plan>
  );
}

/* ---------- trees ---------- */

const surveys: { file: string; tag: string; radio: 'empty' | 'grey' | 'on' }[] = [
  { file: 'VirtualSurvey1.svd', tag: 'V', radio: 'empty' },
  { file: 'PassiveSurvey-06-08-09.svd', tag: 'P', radio: 'empty' },
  { file: 'PassiveSurvey-06-08-09_STA.svd', tag: 'L', radio: 'grey' },
  { file: 'PassiveSurvey(8-9)06-08-09_STA.svd', tag: 'L', radio: 'empty' },
  { file: 'PassiveSurvey(8-9)06-08-09.svd', tag: 'P', radio: 'on' },
];

const ssids = [
  { name: 'cisco', checked: true, radio: 'syze_wifi (ch 1, -67)' },
  { name: 'CS_wifi', checked: false, radio: '00:13:10:9B:26:70 (ch 6, -73)' },
  { name: 'icsd-wireless', checked: false, radio: '00:14:C1:38:DF:BD (ch 11, -90)' },
  { name: 'ISLab', checked: false, radio: '00:22:15:68:17:98 (ch 6, -65)' },
];

function ProjectTree() {
  return (
    <TopTree>
      <TreeList>
        <Row $pad={5} $trunk>
          <Expander $gap={5} />
          <NodeIcon $gap={5}><SiteMapIcon /></NodeIcon>
          Site Map
        </Row>
        <Row $pad={40} $trunk $elbow={28}>
          <CheckFrame $gap={8}><Tick /></CheckFrame>
          ΚΑΤΟΨΗ ΚΤΙΡ Α Β Α ΟΡΟΦΟΥ.dwg
        </Row>
        <Row $pad={5} $trunk>
          <Expander $gap={3} />
          <NodeIcon $gap={4}><BoomerangIcon /></NodeIcon>
          Survey Data
        </Row>
        {surveys.map((s) => (
          <Row key={s.file} $pad={38} $trunk $elbow={28}>
            <Radio $state={s.radio} />
            <TypeTag>{s.tag}</TypeTag>
            {s.file}
          </Row>
        ))}
        <Row $pad={5} $trunk>
          <Expander $gap={5} />
          <NodeIcon $gap={5}><WalkerIcon /></NodeIcon>
          Survey Path
        </Row>
        <Row $pad={40} $elbow={28}>
          <CheckFrame $gap={8} />
          PassiveSurvey-06-08-09.path
        </Row>
        <Row $pad={40} $elbow={28}>
          <CheckFrame $gap={8} />
          PassiveSurvey-06-08-09_STA.path
        </Row>
        <Row $pad={40} $elbow={28}>
          <CheckFrame $gap={8}><Tick /></CheckFrame>
          <Selected>PassiveSurvey(8-9)06-08-09_STA.path</Selected>
        </Row>
      </TreeList>
      <TreeScroll>
        <ScrollButton><Chevron /></ScrollButton>
        <ScrollThumb $top={14} $height={152}><ScrollGrip /></ScrollThumb>
        <ScrollFill />
        <ScrollButton><Chevron down /></ScrollButton>
      </TreeScroll>
    </TopTree>
  );
}

function FilterPanel() {
  return (
    <LowerPanel>
      <FilterRow>
        <FilterField>All checked SSID</FilterField>
        <RoundButton $ml={5}>
          <svg width="12" height="12" viewBox="0 0 12 12">
            <rect x="1" y="1" width="10" height="10" fill="#fff" stroke="#000" strokeWidth="1.500" />
            <path d="M3 6l2 2.500L9.500 3" fill="none" stroke="#000" strokeWidth="1.600" />
          </svg>
        </RoundButton>
        <RoundButton $ml={2}>
          <svg width="16" height="16" viewBox="0 0 16 16" fill="none" stroke="#2030c0" strokeWidth="1.400">
            <path d="M2 4l6 5 6-5M5 3l3 3 3-3" />
            <path d="M8 10v4" stroke="#666" strokeDasharray="1 1" />
          </svg>
        </RoundButton>
      </FilterRow>
      <SsidTree>
        <Row $pad={0}>
          <NodeIcon $gap={0}><SsidIcon root /></NodeIcon>
          <RootLabel>SSID</RootLabel>
        </Row>
        {ssids.map((s) => (
          <React.Fragment key={s.name}>
            <Row $pad={4} $trunk>
              <Expander $gap={9} />
              <CheckFrame $gap={3}>{s.checked && <Tick />}</CheckFrame>
              <NodeIcon $gap={5}>{s.checked ? <GroupIcon /> : <SsidIcon />}</NodeIcon>
              <SsidName>{s.name}</SsidName>
            </Row>
            <Row $pad={40} $trunk $elbow={27}>
              <CheckFrame $gap={4}><Tick /></CheckFrame>
              <NodeIcon $gap={5}><RadioGIcon /></NodeIcon>
              <SsidName>{s.radio}</SsidName>
            </Row>
          </React.Fragment>
        ))}
      </SsidTree>
    </LowerPanel>
  );
}

const legendSteps = ['#0033a8', '#0066c8', '#0098d4', '#00c4e8', '#00f0f4', '#33ffff'];

function Tools() {
  return (
    <ToolBar>
      <ToolColumn>
        <ToolGrid $h={154} $pad={5}>
          {toolIcons.map((icon, i) => (
            <ToolIcon key={i}>{icon}</ToolIcon>
          ))}
        </ToolGrid>
        <ToolGrid $h={51} $pad={2}>
          {toolIconsLower.map((icon, i) => (
            <ToolIcon key={i}>{icon}</ToolIcon>
          ))}
        </ToolGrid>
        <RefreshPad />
        <LegendBox>
          <RefreshButton>
            <svg width="24" height="22" viewBox="0 0 24 22">
              <path d="M2 4h8c3 0 3 5 3 10l3-1-5 7-4-7 3 1c0-3 0-6-3-6H5z" fill="#1428c8" />
              <path d="M22 18h-7c-2 0-3-3-3-6l3 1c0 1 0 2 1 2h2c1-3 0-6-1-7l-2 1 4-6 4 7-2-1c1 3 1 6 1 9z" fill="#e01010" />
            </svg>
          </RefreshButton>
          <LegendTitle>Signal<br />(dBm)</LegendTitle>
          <LegendBody>
            <LegendScale>
              {legendSteps.map((c) => (
                <LegendStep key={c} $color={c} />
              ))}
            </LegendScale>
            <LegendTicks>0<br />-10<br />-20</LegendTicks>
          </LegendBody>
        </LegendBox>
      </ToolColumn>
    </ToolBar>
  );
}

export default function App() {
  return (
    <Window>
      <GlobalStyle />
      <TitleBar>
        <TitleWave width="1440" height="27" viewBox="0 0 1440 27">
          <path d="M0 14C0 5 5 0 14 0H0Z" fill="#f6f6f6" />
          <path d="M1190 24C1215 22 1220 1 1250 1H1420C1432 1 1440 8 1440 20V27H1190Z" fill="#e4e4e4" />
          <path d="M1420 0C1432 1 1440 8 1440 20V0Z" fill="#f6f0f0" />
        </TitleWave>
        <TitleItems>
          <Logo width="24" height="20" viewBox="0 0 24 20">
            <rect width="24" height="20" fill="#008a00" />
            <rect x="3" y="3" width="7" height="6" fill="#e4e4e4" />
            <rect x="14" y="3" width="7" height="6" fill="#e4e4e4" />
            <rect x="3" y="12" width="7" height="5" fill="#e4e4e4" />
            <rect x="14" y="12" width="7" height="5" fill="#e4e4e4" />
            <rect x="10" y="8" width="4" height="4" fill="#e4e4e4" />
          </Logo>
          <AppName>AIRMAGNET Survey</AppName>
          <FileName>Erg-8-9.svp</FileName>
          <ModePill>802.11<ModeG>g</ModeG></ModePill>
          <Menu>
            <span><MenuLetter>F</MenuLetter>ile</span>
            <span><MenuLetter>V</MenuLetter>iew</span>
            <span><MenuLetter>H</MenuLetter>elp</span>
          </Menu>
          <WinButtons>
            <WinButton>
              <svg width="10" height="10" viewBox="0 0 10 10"><path d="M1 7.500H9" stroke="#555" strokeWidth="2" /></svg>
            </WinButton>
            <WinButton>
              <svg width="10" height="10" viewBox="0 0 10 10"><rect x="1.500" y="1.500" width="7" height="7" fill="none" stroke="#555" strokeWidth="1.300" /></svg>
            </WinButton>
            <WinButton>
              <svg width="10" height="10" viewBox="0 0 10 10"><path d="M1.500 1.500l7 7M8.500 1.500l-7 7" stroke="#555" strokeWidth="2" /></svg>
            </WinButton>
          </WinButtons>
        </TitleItems>
      </TitleBar>
      <Body>
        <SidePanel>
          <ProjectTree />
          <FilterPanel />
        </SidePanel>
        <MapPane>
          <MapFrame>
            <RulerRow>
              <RulerCorner />
              <TopRulerMarks />
              <LensSelect>
                <LensValue>Signal</LensValue>
                <LensArrow>
                  <svg width="9" height="5" viewBox="0 0 9 5"><path d="M0 0h9L4.500 5z" fill="#111" /></svg>
                </LensArrow>
              </LensSelect>
            </RulerRow>
            <CanvasRow>
              <LeftRulerMarks />
              <FloorPlan />
            </CanvasRow>
          </MapFrame>
          <MapScroll>
            <ScrollButton><Chevron /></ScrollButton>
            <ScrollThumb $top={163} $height={260}><ScrollGrip /></ScrollThumb>
          </MapScroll>
          <ScrollEdge />
        </MapPane>
        <Tools />
      </Body>
    </Window>
  );
}
